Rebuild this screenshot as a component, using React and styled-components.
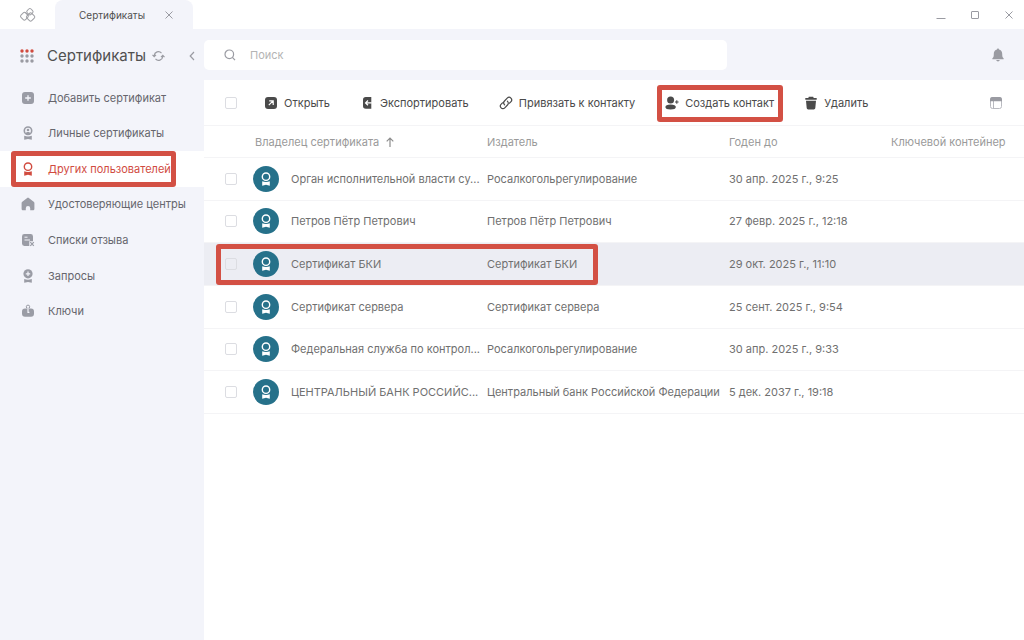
import { useState } from 'react';
import styled, { createGlobalStyle, css } from 'styled-components';

const menu = [
  { id: 'add', label: 'Добавить сертификат' },
  { id: 'personal', label: 'Личные сертификаты' },
  { id: 'others', label: 'Других пользователей', marked: true },
  { id: 'centers', label: 'Удостоверяющие центры' },
  { id: 'revoked', label: 'Списки отзыва' },
  { id: 'requests', label: 'Запросы' },
  { id: 'keys', label: 'Ключи' },
];

const actions = [
  { id: 'open', label: 'Открыть' },
  { id: 'export', label: 'Экспортировать' },
  { id: 'link', label: 'Привязать к контакту' },
  { id: 'contact', label: 'Создать контакт', marked: true },
  { id: 'trash', label: 'Удалить' },
];

const certificates = [
  {
    owner: 'Орган исполнительной власти су...',
    issuer: 'Росалкогольрегулирование',
    until: '30 апр. 2025 г., 9:25',
  },
  {
    owner: 'Петров Пётр Петрович',
    issuer: 'Петров Пётр Петрович',
    until: '27 февр. 2025 г., 12:18',
  },
  {
    owner: 'Сертификат БКИ',
    issuer: 'Сертификат БКИ',
    until: '29 окт. 2025 г., 11:10',
    marked: true,
  },
  {
    owner: 'Сертификат сервера',
    issuer: 'Сертификат сервера',
    until: '25 сент. 2025 г., 9:54',
  },
  {
    owner: 'Федеральная служба по контрол...',
    issuer: 'Росалкогольрегулирование',
    until: '30 апр. 2025 г., 9:33',
  },
  {
    owner: 'ЦЕНТРАЛЬНЫЙ БАНК РОССИЙС...',
    issuer: 'Центральный банк Российской Федерации',
    until: '5 дек. 2037 г., 19:18',
  },
];

const Logo = () => (
  <svg width='18' height='16' viewBox='0 0 18 16' fill='none' stroke='#a0a1a6' strokeWidth='1'>
    <rect x='2.2' y='6' width='6.4' height='6.4' rx='1.6' transform='rotate(45 5.4 9.2)' />
    <rect x='8.2' y='6.6' width='6.8' height='6.8' rx='1.6' transform='rotate(45 11.600 10)' />
    <rect x='8.2' y='2' width='5.4' height='5.4' rx='1.6' transform='rotate(45 10.9 4.7)' />
    <path d='M6.2 5.200 9.600 8.600' />
  </svg>
);

const Badge = () => (
  <svg width='14' height='14' viewBox='0 0 14 14' fill='none'>
    <circle cx='7' cy='4.7' r='3.7' stroke='currentColor' strokeWidth='1.4' />
    <path d='M3.2 9.2c2.400.900 5.200.900 7.600 0v4.600L7 12.700l-3.800 1.100z' fill='currentColor' />
  </svg>
);

const MenuIcon = ({ id }) => {
  if (id === 'others') {
    return <Badge />;
  }
  return (
    <svg width='14' height='14' viewBox='0 0 14 14' fill='currentColor'>
      {id === 'add' && (
        <>
          <rect x='1' y='1' width='12' height='12' rx='3' />
          <path d='M7 4.2v5.6M4.2 7h5.6' stroke='#f3f4fa' strokeWidth='1.3' />
        </>
      )}
      {id === 'personal' && (
        <>
          <circle cx='7' cy='4.7' r='3.7' fill='none' stroke='currentColor' strokeWidth='1.6' />
          <circle cx='7' cy='4' r='1.3' />
          <path d='M4.4 7.4c.4-2 4.800-2 5.200 0-1.200 1.300-4 1.300-5.200 0zM3.2 9.800c2.400.9 5.200.9 7.600 0v4L7 12.900l-3.800.9z' />
        </>
      )}
      {id === 'centers' && (
        <path d='M6.200.9a1.300 1.300 0 0 1 1.600 0l4.900 3.800c.4.3.7.800.7 1.300v5.900c0 .8-.7 1.400-1.500 1.400H9.200v-2.100a2.200 2.200 0 0 0-4.400 0v2.100H2.100c-.8 0-1.500-.6-1.500-1.400V6c0-.5.3-1 .7-1.300z' />
      )}
      {id === 'revoked' && (
        <>
          <path d='M3.400 1h6.200A2.400 2.400 0 0 1 12 3.400v4.800H8.300v4.700H3.400A2.400 2.400 0 0 1 1 10.500V3.400A2.400 2.400 0 0 1 3.400 1z' />
          <path d='M3.500 4.200h3M3.500 7h5.500' stroke='#f3f4fa' strokeWidth='1' />
          <path d='m9.300 9.200 3.500 3.700m0-3.700-3.500 3.700' stroke='currentColor' strokeWidth='1.200' />
        </>
      )}
      {id === 'requests' && (
        <>
          <circle cx='7' cy='4.800' r='4.600' />
          <path d='M7 2.600v4.400M4.800 4.800h4.400' stroke='#f3f4fa' strokeWidth='1.200' />
          <path d='M3.200 10c2.400.9 5.200.9 7.600 0v3.800L7 12.900l-3.800.9z' />
        </>
      )}
      {id === 'keys' && (
        <>
          <circle cx='7' cy='2.800' r='1.700' fill='none' stroke='currentColor' strokeWidth='1' />
          <rect x='1' y='4.600' width='12' height='8.200' rx='3' />
          <path d='M7 4v5M7 8.400h1.400' stroke='#f3f4fa' strokeWidth='1.200' />
        </>
      )}
    </svg>
  );
};

const ActionIcon = ({ id }) => (
  <svg width='14' height='14' viewBox='0 0 14 14' fill='currentColor'>
    {id === 'open' && (
      <>
        <rect x='1' y='1' width='12' height='12' rx='3' />
        <path d='M4.800 9.200 8.800 5.200M5.200 4.900h4v4' fill='none' stroke='#fff' strokeWidth='1.200' />
      </>
    )}
    {id === 'export' && (
      <>
        <path d='M5.800 1h5.500v11.800H5.800A2.800 2.800 0 0 1 3 10V3.800A2.800 2.800 0 0 1 5.800 1z' />
        <path d='M11.800 6.900H5.800M8 4.500 5.600 6.900 8 9.300' fill='none' stroke='#fff' strokeWidth='1.300' />
      </>
    )}
    {id === 'link' && (
      <g fill='none' stroke='currentColor' strokeWidth='1.200' strokeLinecap='round'>
        <path d='M5.600 8.800C4.300 7.500 4.500 6 5.500 5l2.700-2.800c1.100-1.100 2.700-1.100 3.700-.1s1 2.600-.1 3.700L10.500 7.200' />
        <path d='M8.400 5.200c1.300 1.300 1.100 2.800.1 3.800l-2.700 2.800c-1.100 1.100-2.700 1.100-3.700.1s-1-2.600.1-3.700L3.500 6.800' />
      </g>
    )}
    {id === 'contact' && (
      <>
        <circle cx='5.600' cy='3.900' r='3.500' />
        <ellipse cx='5.600' cy='10.900' rx='5.200' ry='2.500' />
        <path d='M11.800 4.200v3.600M10 6h3.600' stroke='currentColor' strokeWidth='1.100' />
      </>
    )}
    {id === 'trash' && (
      <path d='M4.800.8h4.400l.5 1.300h3v1.700H1.300V2.100h3zM2 4.800h10l-.7 7.200c-.1.800-.7 1.400-1.500 1.400H4.200c-.8 0-1.400-.6-1.500-1.400z' />
    )}
  </svg>
);

const App = () => {
  const [active, setActive] = useState('others');
  const [search, setSearch] = useState('');

  return (
    <Screen>
      <GlobalStyle />
      <TitleBar>
        <LogoBox>
          <Logo />
        </LogoBox>
        <Tab>
          Сертификаты
          <IconButton aria-label='Закрыть вкладку'>
            <svg width='8' height='8' viewBox='0 0 8 8' stroke='currentColor'>
              <path d='m.5.500 7 7m0-7-7 7' />
            </svg>
          </IconButton>
        </Tab>
        <WindowButtons>
          <IconButton aria-label='Свернуть'>
            <svg width='10' height='10' viewBox='0 0 10 10' stroke='currentColor'>
              <path d='M.5 8.500h9' />
            </svg>
          </IconButton>
          <IconButton aria-label='Развернуть'>
            <svg width='10' height='10' viewBox='0 0 10 10' fill='none' stroke='currentColor'>
              <rect x='1.500' y='1.500' width='7' height='7' rx='.5' />
            </svg>
          </IconButton>
          <IconButton aria-label='Закрыть'>
            <svg width='10' height='10' viewBox='0 0 10 10' stroke='currentColor'>
              <path d='m1.500 1.500 7 7m0-7-7 7' />
            </svg>
          </IconButton>
        </WindowButtons>
      </TitleBar>

      <Body>
        <Sidebar>
          <SidebarHeader>
            <svg width='14' height='14' viewBox='0 0 14 14'>
              {[2, 7, 12].map((y) =>
                [2, 7, 12].map((x) => (
                  <circle key={`${x}-${y}`} cx={x} cy={y} r='1.700' fill={y === 2 ? '#d14b3f' : '#9a9ba2'} />
                ))
              )}
            </svg>
            <Title>Сертификаты</Title>
            <IconButton aria-label='Обновить'>
              <svg width='13' height='12' viewBox='0 0 13 12' fill='none' stroke='currentColor' strokeWidth='1.200'>
                <path d='M2.200 6.500V5.500a4.200 4.200 0 0 1 7.300-2.400M.5 4.900l1.700 1.700 1.800-1.700M10.800 5.500v1a4.200 4.200 0 0 1-7.300 2.400M12.500 7.100l-1.700-1.700L9 7.100' />
              </svg>
            </IconButton>
            <Collapse aria-label='Свернуть меню'>
              <svg width='6' height='10' viewBox='0 0 6 10' fill='none' stroke='currentColor' strokeWidth='1.200'>
                <path d='M5 1 1.200 5 5 9' />
              </svg>
            </Collapse>
          </SidebarHeader>
          <Menu>
            {menu.map((item) => (
              <MenuItem
                key={item.id}
                $active={item.id === active}
                onClick={() => setActive(item.id)}
              >
                <MenuIcon id={item.id} />
                <span>{item.label}</span>
                {item.marked && <MenuMark />}
              </MenuItem>
            ))}
          </Menu>
        </Sidebar>

        <Main>
          <TopRow>
            <SearchBox>
              <svg width='12' height='12' viewBox='0 0 12 12' fill='none' stroke='#9a9ba2' strokeWidth='1.200'>
                <circle cx='5.300' cy='5.300' r='4.300' />
                <path d='m8.400 8.400 2.600 2.800' />
              </svg>
              <SearchInput
                aria-label='Поиск'
                placeholder='Поиск'
                value={search}
                onChange={(e) => setSearch(e.target.value)}
              />
            </SearchBox>
            <IconButton aria-label='Уведомления'>
              <svg width='12' height='14' viewBox='0 0 12 14' fill='currentColor'>
                <path d='M6 .5c.7 0 1 .5 1 1 2 .5 3.200 2.200 3.200 4.200 0 2.600.3 3.600 1.300 4.600.4.500.2 1-.3 1H.8c-.5 0-.7-.5-.3-1 1-1 1.300-2 1.300-4.600C1.800 3.700 3 2 5 1.500c0-.5.3-1 1-1zM4.200 12h3.600c-.3 1.900-3.300 1.900-3.600 0z' />
              </svg>
            </IconButton>
          </TopRow>

          <Panel>
            <Toolbar>
              <Checkbox aria-label='Выбрать все' />
              <Actions>
                {actions.map((action) => (
                  <Action key={action.id}>
                    <ActionIcon id={action.id} />
                    {action.label}
                    {action.marked && <ActionMark />}
                  </Action>
                ))}
              </Actions>
              <IconButton aria-label='Настроить столбцы'>
                <svg width='14' height='14' viewBox='0 0 14 14' fill='none' stroke='#b9bac0'>
                  <rect x='1.500' y='1.500' width='11' height='11' rx='2' />
                  <path d='M4.500 5v7.500' />
                  <path d='M1 5.200V3.400A2.400 2.400 0 0 1 3.400 1h7.200A2.400 2.400 0 0 1 13 3.400v1.800z' fill='#9a9ba2' stroke='none' />
                </svg>
              </IconButton>
            </Toolbar>

            <Table>
              <colgroup>
                <CheckCol />
                <OwnerCol />
                <IssuerCol />
                <DateCol />
                <col />
              </colgroup>
              <thead>
                <tr>
                  <HeadCell aria-label='Выбор' />
                  <HeadCell>
                    <Sorted>
                      Владелец сертификата
                      <svg width='8' height='10' viewBox='0 0 8 10' fill='none' stroke='#8d8d8d' strokeWidth='1.200'>
                        <path d='M4 10V1M.7 4.300 4 1l3.300 3.300' />
                      </svg>
                    </Sorted>
                  </HeadCell>
                  <HeadCell>Издатель</HeadCell>
                  <HeadCell>Годен до</HeadCell>
                  <HeadCell>Ключевой контейнер</HeadCell>
                </tr>
              </thead>
              <tbody>
                {certificates.map((cert) => (
                  <Row key={cert.owner} $selected={cert.marked}>
                    <CheckCell>
                      <Checkbox aria-label={cert.owner} />
                      {cert.marked && <RowMark />}
                    </CheckCell>
                    <Cell>
                      <Owner>
                        <Avatar>
                          <Badge />
                        </Avatar>
                        {cert.owner}
                      </Owner>
                    </Cell>
                    <Cell>{cert.issuer}</Cell>
                    <Cell>{cert.until}</Cell>
                    <Cell />
                  </Row>
                ))}
              </tbody>
            </Table>
          </Panel>
        </Main>
      </Body>
    </Screen>
  );
};

const GlobalStyle = createGlobalStyle`
  * {
    box-sizing: border-box;
  }

  body {
    margin: 0;
    background-color: white;
    color: #707070;
    font-family: Inter, 'Liberation Sans', sans-serif;
    font-size: 11px;
    line-height: 16px;
  }

  button, input {
    font: inherit;
    color: inherit;
  }

  svg {
    display: block;
    flex-shrink: 0;
  }
`;

const Screen = styled.div`
  display: flex;
  flex-direction: column;
  min-height: 100vh;
`;

const TitleBar = styled.header`
  display: flex;
  height: 29px;
`;

const LogoBox = styled.div`
  display: flex;
  align-items: center;
  justify-content: center;
  width: 55px;
`;

const IconButton = styled.button`
  display: flex;
  align-items: center;
  padding: 0;
  border: none;
  background: none;
  color: #9a9ba2;
  cursor: pointer;
`;

const Tab = styled.div`
  display: flex;
  align-items: center;
  justify-content: space-between;
  width: 138px;
  padding: 0 20px 0 24px;
  border-radius: 8px 8px 0 0;
  background-color: #f3f4fa;
  color: #505050;
  font-size: 10px;
`;

const WindowButtons = styled.div`
  display: flex;
  align-items: center;
  gap: 24px;
  margin-left: auto;
  padding-right: 10px;
`;

const Body = styled.div`
  display: flex;
  flex: 1;
`;

const Sidebar = styled.aside`
  flex-shrink: 0;
  width: 204px;
  background-color: #f3f4fa;
`;

const SidebarHeader = styled.div`
  display: flex;
  align-items: center;
  height: 51px;
  padding: 2px 9px 0 20px;
`;

const Title = styled.h1`
  margin: 0 6px 0 13px;
  color: #505050;
  font-size: 15px;
  font-weight: 400;
`;

const Collapse = styled(IconButton)`
  margin-left: auto;
`;

const Menu = styled.nav`
  display: grid;
  grid-auto-rows: 1fr;
  min-height: 249px;
`;

const mark = css`
  position: absolute;
  border: 5px solid #d35044;
  border-radius: 3px;
  pointer-events: none;
`;

const MenuMark = styled.i`
  ${mark}
  inset: 0 28px 0 11px;
`;

const ActionMark = styled.i`
  ${mark}
  inset: -10px -9px -11px -8px;
`;

const RowMark = styled.i`
  ${mark}
  top: 1px;
  left: 12px;
  width: 382px;
  height: 41px;
`;

const MenuItem = styled.button`
  position: relative;
  display: flex;
  align-items: center;
  gap: 13px;
  padding: 0 0 0 21px;
  border: none;
  background-color: ${({ $active }) => ($active ? 'white' : 'transparent')};
  cursor: pointer;

  svg {
    color: ${({ $active }) => ($active ? '#d14b3f' : '#9a9ca5')};
  }

  span {
    color: ${({ $active }) => ($active ? '#d14b3f' : '#66666d')};
  }
`;

const Main = styled.main`
  display: flex;
  flex: 1;
  flex-direction: column;
  min-width: 0;
  background-color: #f3f4fa;
`;

const TopRow = styled.div`
  display: flex;
  align-items: center;
  justify-content: space-between;
  height: 51px;
  padding-right: 20px;
`;

const SearchBox = styled.label`
  display: flex;
  flex: 1;
  align-items: center;
  gap: 14px;
  max-width: 523px;
  height: 30px;
  padding: 0 20px;
  border-radius: 5px;
  background-color: white;
`;

const SearchInput = styled.input`
  flex: 1;
  padding: 0;
  border: none;
  outline: none;
  background: none;

  &::placeholder {
    color: #b4b4b4;
    opacity: 1;
  }
`;

const Panel = styled.section`
  flex: 1;
  background-color: white;
`;

const Toolbar = styled.div`
  display: flex;
  align-items: center;
  height: 46px;
  padding: 0 21px;
  border-bottom: 1px solid #f4f4f6;
`;

const Checkbox = styled.input.attrs({ type: 'checkbox' })`
  display: block;
  appearance: none;
  width: 12px;
  height: 12px;
  margin: 0;
  border: 1px solid #dcdde2;
  border-radius: 2px;

  &:checked {
    background-color: #26718a;
  }
`;

const Actions = styled.div`
  display: flex;
  flex: 1;
  gap: 30px;
  margin-left: 27px;
`;

const Action = styled.button`
  position: relative;
  display: flex;
  align-items: center;
  gap: 6px;
  padding: 0;
  border: none;
  background: none;
  color: #4a4a4a;
  white-space: nowrap;
  cursor: pointer;
`;

const Table = styled.table`
  width: 100%;
  height: 288px;
  border-spacing: 0;
  table-layout: fixed;
`;

const CheckCol = styled.col`
  width: 49px;
`;

const OwnerCol = styled.col`
  width: 234px;
`;

const IssuerCol = styled.col`
  width: 242px;
`;

const DateCol = styled.col`
  width: 162px;
`;

const HeadCell = styled.th`
  height: 32px;
  padding: 0;
  border-bottom: 1px solid #f4f4f6;
  color: #9a9a9a;
  font-weight: 400;
  text-align: left;
  white-space: nowrap;
`;

const Sorted = styled.div`
  display: flex;
  align-items: center;
  gap: 7px;
  padding-left: 2px;
`;

const Row = styled.tr`
  background-color: ${({ $selected }) => ($selected ? '#ecedf3' : 'white')};
`;

const Cell = styled.td`
  padding: 0;
  border-bottom: 1px solid #f4f4f6;
  white-space: nowrap;
`;

const CheckCell = styled(Cell)`
  position: relative;
  padding-left: 21px;
`;

const Owner = styled.div`
  display: flex;
  align-items: center;
  gap: 12px;
`;

const Avatar = styled.div`
  display: flex;
  align-items: center;
  justify-content: center;
  width: 26px;
  height: 26px;
  border-radius: 50%;
  background-color: #26718a;
  color: white;
`;

export default App;
